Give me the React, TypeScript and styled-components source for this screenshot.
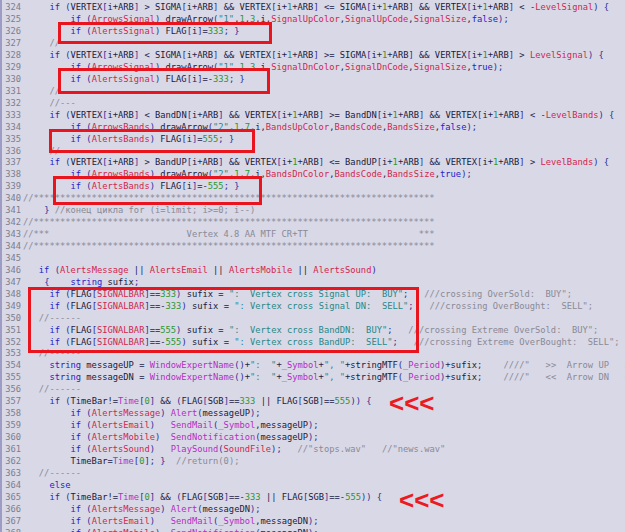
import React from "react";
import styled, { createGlobalStyle } from "styled-components";

const BG = "#d8d8e6";

const Global = createGlobalStyle`
  html, body { margin: 0; padding: 0; background: ${BG}; }
  #root { width: 625px; height: 532px; overflow: hidden; }
`;

const Editor = styled.div`
  position: relative;
  width: 625px;
  height: 532px;
  overflow: hidden;
  background: ${BG};
  display: flex;
  flex-direction: column;
  padding-top: 2.3px;
  box-sizing: border-box;
  border-left: 2px solid #9c9cc4;
`;

const Row = styled.div`
  display: flex;
  height: 11.95px;
  line-height: 11.95px;
  font-family: "DejaVu Sans Mono", monospace;
  font-size: 8.77px;
  white-space: pre;
`;

const LineNo = styled.div`
  flex: 0 0 20px;
  box-sizing: border-box;
  text-align: right;
  padding-right: 1px;
  color: #7e7e8c;
`;

const Code = styled.div`
  flex: 1;
  padding-left: 1px;
  color: #1a1a40;
`;

type Kind = "kw" | "id" | "num" | "inp" | "fn" | "str" | "com" | "br" | "op" | "ws";

const colors: Record<Kind, string> = {
  kw: "#2323c8",
  id: "#1a1a40",
  num: "#2f962f",
  inp: "#d2264e",
  fn: "#b42ec4",
  str: "#268888",
  com: "#8a8a96",
  br: "#2c2c96",
  op: "#24244a",
  ws: "inherit",
};

const Tok = styled.span<{ $kind: Kind }>`
  color: ${(p) => colors[p.$kind]};
`;

const Box = styled.div`
  position: absolute;
  border: 3px solid #e8141e;
  box-sizing: border-box;
  pointer-events: none;
`;

const Marker = styled.div`
  position: absolute;
  color: #ec1a22;
  font-family: "Liberation Sans", Arial, sans-serif;
  font-weight: bold;
  font-size: 26px;
  line-height: 26px;
`;

const KW = new Set(["if", "else", "string", "true", "false", "for"]);
const INP = new Set([
  "LevelSignal", "AlertsSignal", "ArrowsSignal", "SignalUpColor", "SignalUpCode", "SignalSize",
  "SignalDnColor", "SignalDnCode", "LevelBands", "ArrowsBands", "AlertsBands", "BandsUpColor",
  "BandsCode", "BandsSize", "BandsDnColor", "SIGNALBAR", "AlertsMessage", "AlertsEmail",
  "AlertsMobile", "AlertsSound", "SoundFile",
]);
const FN = new Set([
  "WindowExpertName", "Alert", "SendMail", "SendNotification", "PlaySound", "Time", "_Symbol", "_Period",
]);

function tokenize(line: string): { t: string; k: Kind }[] {
  const out: { t: string; k: Kind }[] = [];
  const re = /(\/\/.*$)|("[^"]*")|(\d+)|([A-Za-z_][A-Za-z0-9_]*)|(\s+)|([()[\]{};])|(.)/g;
  let m: RegExpExecArray | null;
  while ((m = re.exec(line)) !== null) {
    if (m[1]) out.push({ t: m[1], k: "com" });
    else if (m[2]) out.push({ t: m[2], k: "str" });
    else if (m[3]) out.push({ t: m[3], k: "num" });
    else if (m[4]) {
      const w = m[4];
      out.push({ t: w, k: KW.has(w) ? "kw" : INP.has(w) ? "inp" : FN.has(w) ? "fn" : "id" });
    } else if (m[5]) out.push({ t: m[5], k: "ws" });
    else if (m[6]) out.push({ t: m[6], k: "br" });
    else out.push({ t: m[7], k: "op" });
  }
  return out;
}

const sp = (n: number) => " ".repeat(n);
const stars = "//" + "*".repeat(76);

const lines: string[] = [
  sp(5) + "if (VERTEX[i+ARB] > SIGMA[i+ARB] && VERTEX[i+1+ARB] <= SIGMA[i+1+ARB] && VERTEX[i+1+ARB] < -LevelSignal) {",
  sp(9) + 'if (ArrowsSignal) drawArrow("1",1,3,i,SignalUpColor,SignalUpCode,SignalSize,false);',
  sp(9) + "if (AlertsSignal) FLAG[i]=333; }",
  sp(5) + "//",
  sp(5) + "if (VERTEX[i+ARB] < SIGMA[i+ARB] && VERTEX[i+1+ARB] >= SIGMA[i+1+ARB] && VERTEX[i+1+ARB] > LevelSignal) {",
  sp(9) + 'if (ArrowsSignal) drawArrow("1",1,3,i,SignalDnColor,SignalDnCode,SignalSize,true);',
  sp(9) + "if (AlertsSignal) FLAG[i]=-333; }",
  sp(5) + "//---",
  sp(5) + "//---",
  sp(5) + "if (VERTEX[i+ARB] < BandDN[i+ARB] && VERTEX[i+1+ARB] >= BandDN[i+1+ARB] && VERTEX[i+1+ARB] < -LevelBands) {",
  sp(9) + 'if (ArrowsBands) drawArrow("2",1,7,i,BandsUpColor,BandsCode,BandsSize,false);',
  sp(9) + "if (AlertsBands) FLAG[i]=555; }",
  sp(5) + "//",
  sp(5) + "if (VERTEX[i+ARB] > BandUP[i+ARB] && VERTEX[i+1+ARB] <= BandUP[i+1+ARB] && VERTEX[i+1+ARB] > LevelBands) {",
  sp(9) + 'if (ArrowsBands) drawArrow("2",1,7,i,BandsDnColor,BandsCode,BandsSize,true);',
  sp(9) + "if (AlertsBands) FLAG[i]=-555; }",
  stars,
  sp(4) + "} //конец цикла for (i=limit; i>=0; i--)",
  stars,
  "//***" + sp(26) + "Vertex 4.8 AA MTF CR+TT" + sp(21) + "***",
  stars,
  "",
  sp(3) + "if (AlertsMessage || AlertsEmail || AlertsMobile || AlertsSound)",
  sp(4) + "{    string sufix;",
  sp(5) + 'if (FLAG[SIGNALBAR]==333) sufix = ":  Vertex cross Signal UP:  BUY";   ///crossing OverSold:  BUY";',
  sp(5) + 'if (FLAG[SIGNALBAR]==-333) sufix = ": Vertex cross Signal DN:  SELL";   ///crossing OverBought:  SELL";',
  sp(3) + "//------",
  sp(5) + 'if (FLAG[SIGNALBAR]==555) sufix = ":  Vertex cross BandDN:  BUY";   ///crossing Extreme OverSold:  BUY";',
  sp(5) + 'if (FLAG[SIGNALBAR]==-555) sufix = ": Vertex cross BandUP:  SELL";   ///crossing Extreme OverBought:  SELL";',
  sp(3) + "//------",
  sp(5) + 'string messageUP = WindowExpertName()+":  "+_Symbol+", "+stringMTF(_Period)+sufix;    ////"   >>  Arrow UP   >>',
  sp(5) + 'string messageDN = WindowExpertName()+":  "+_Symbol+", "+stringMTF(_Period)+sufix;    ////"   <<  Arrow DN   <<',
  sp(3) + "//------",
  sp(5) + "if (TimeBar!=Time[0] && (FLAG[SGB]==333 || FLAG[SGB]==555)) {",
  sp(9) + "if (AlertsMessage) Alert(messageUP);",
  sp(9) + "if (AlertsEmail)   SendMail(_Symbol,messageUP);",
  sp(9) + "if (AlertsMobile)  SendNotification(messageUP);",
  sp(9) + 'if (AlertsSound)   PlaySound(SoundFile);   //"stops.wav"   //"news.wav"',
  sp(9) + "TimeBar=Time[0]; }  //return(0);",
  sp(3) + "//------",
  sp(5) + "else",
  sp(5) + "if (TimeBar!=Time[0] && (FLAG[SGB]==-333 || FLAG[SGB]==-555)) {",
  sp(9) + "if (AlertsMessage) Alert(messageDN);",
  sp(9) + "if (AlertsEmail)   SendMail(_Symbol,messageDN);",
  sp(9) + "if (AlertsMobile)  SendNotification(messageDN);",
];

const boxes = [
  { x: 56, y: 22, w: 214, h: 22 },
  { x: 56, y: 68, w: 212, h: 26 },
  { x: 47, y: 129, w: 206, h: 24 },
  { x: 51, y: 176, w: 209, h: 29 },
  { x: 26, y: 287, w: 391, h: 66 },
];

const markers = [
  { x: 387, y: 390 },
  { x: 397, y: 487 },
];

export default function App() {
  return (
    <>
      <Global />
      <Editor>
        {lines.map((l, i) => (
          <Row key={i}>
            <LineNo>{324 + i}</LineNo>
            <Code>
              {tokenize(l).map((t, j) => (
                <Tok key={j} $kind={t.k}>
                  {t.t}
                </Tok>
              ))}
            </Code>
          </Row>
        ))}
        {boxes.map((b, i) => (
          <Box key={i} style={{ left: b.x, top: b.y, width: b.w, height: b.h }} />
        ))}
        {markers.map((m, i) => (
          <Marker key={i} style={{ left: m.x, top: m.y }}>
            &lt;&lt;&lt;
          </Marker>
        ))}
      </Editor>
    </>
  );
}
